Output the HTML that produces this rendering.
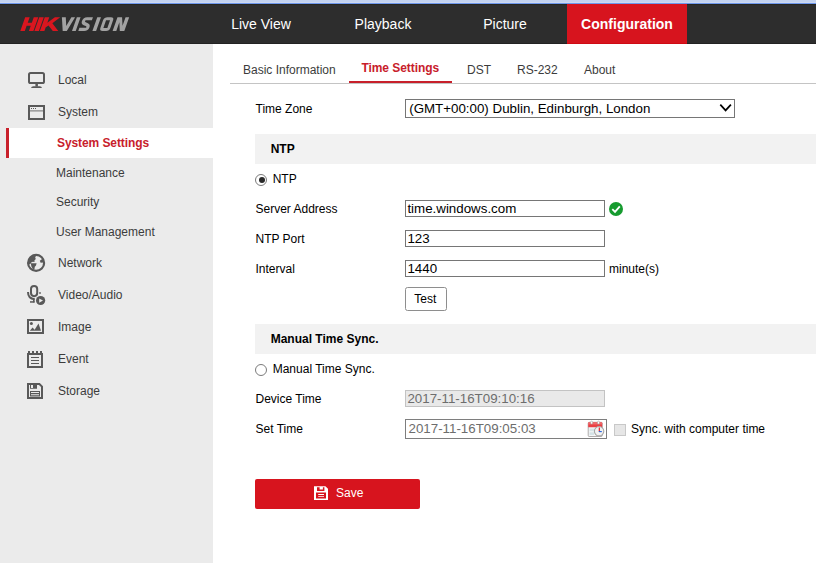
<!DOCTYPE html>
<html>
<head>
<meta charset="utf-8">
<title>Configuration</title>
<style>
*{box-sizing:border-box;margin:0;padding:0}
html,body{width:816px;height:563px;overflow:hidden;background:#fff}
body{font-family:"Liberation Sans",sans-serif;font-size:12px;color:#000;position:relative}
.abs{position:absolute}
.t{position:absolute;white-space:nowrap;line-height:14px;height:14px}
#strip{left:0;top:0;width:816px;height:4px;background:linear-gradient(#c3d2f0 0,#c3d2f0 2px,#ccd8f1 2px,#ccd8f1 3px,#6e97ec 3px,#6e97ec 4px)}
#hdr{left:0;top:4px;width:816px;height:40px;background:#2d2d2d;border-bottom:1px solid #222;border-top:1px solid #262521}
.nav{position:absolute;top:4px;height:40px;width:120px;text-align:center;line-height:40px;font-size:14px;color:#fff}
.nav.on{background:#d7141e;border-bottom:1px solid #cf0a14;font-weight:bold}
#side{left:0;top:44px;width:213px;height:519px;background:#ebebeb}
#sel{left:6px;top:128px;width:207px;height:30px;background:#fff;border-left:3px solid #c8202b}
.m{color:#3c3c3c}
.tab{color:#3c3c3c}
.bar{position:absolute;left:255px;width:561px;height:30px;background:#f2f2f2}
.inp{position:absolute;left:405px;width:200px;height:17px;border:1px solid #767676;background:#fff;font-size:13.333px;line-height:15px;padding-left:1.4px;white-space:nowrap;overflow:hidden}
.radio{position:absolute;width:12px;height:12px;border:1px solid #7b7b7b;border-radius:50%;background:#fff}
</style>
</head>
<body>
<div id="strip" class="abs"></div>
<div id="hdr" class="abs"></div>
<div class="nav" style="left:201px">Live View</div>
<div class="nav" style="left:323px">Playback</div>
<div class="nav" style="left:445px">Picture</div>
<div class="nav on" style="left:567px">Configuration</div>

<!-- logo -->
<svg class="abs" style="left:0;top:0" width="160" height="44" viewBox="0 0 160 44">
<path d="M25.18 17.15 L29.68 17.15 L27.73 22.65 L31.83 22.65 L33.78 17.15 L38.28 17.15 L33.40 30.90 L28.90 30.90 L30.76 25.65 L26.66 25.65 L24.80 30.90 L20.30 30.90 Z M39.28 17.15 L43.78 17.15 L38.90 30.90 L34.40 30.90 Z M44.78 17.15 L49.28 17.15 L44.40 30.90 L39.90 30.90 Z M46.68 23.35 L54.88 17.15 L60.18 17.15 L52.35 23.15 L58.30 30.90 L52.80 30.90 L48.50 25.55 L45.12 27.75 Z" fill="#d9161f"/>
<path d="M61.88 17.15 L65.78 17.15 L66.22 26.05 L71.38 17.15 L75.08 17.15 L66.80 30.90 L62.70 30.90 Z M76.88 17.15 L80.58 17.15 L75.70 30.90 L72.00 30.90 Z M97.28 17.15 L100.98 17.15 L96.10 30.90 L92.40 30.90 Z M117.48 17.15 L122.08 17.15 L122.53 25.75 L125.58 17.15 L129.18 17.15 L124.30 30.90 L119.80 30.90 L119.34 22.35 L116.30 30.90 L112.60 30.90 Z" fill="#a2a2a2"/>
<g transform="matrix(1 0 -0.355 1 4.881 17.15)" fill="none" stroke="#a2a2a2">
<path d="M88.1 1.55 H82.2 Q80 1.55 80 3.9 Q80 5.8 82.2 6.6 L84.6 7.5 Q86.6 8.3 86.6 10 Q86.6 12.2 84.2 12.2 H78.3" stroke-width="3.1"/>
<rect x="100.8" y="1.5" width="7" height="10.75" rx="1.7" stroke-width="3"/>
</g>
</svg>

<div id="side" class="abs"></div>
<div id="sel" class="abs"></div>

<div class="t m" style="left:58px;top:73px">Local</div>
<div class="t m" style="left:58px;top:105px">System</div>
<div class="t" style="left:57px;top:136px;color:#c8202b;font-weight:bold;letter-spacing:-0.09px">System Settings</div>
<div class="t m" style="left:56px;top:166px">Maintenance</div>
<div class="t m" style="left:56px;top:195px">Security</div>
<div class="t m" style="left:56px;top:225px">User Management</div>
<div class="t m" style="left:58px;top:256px">Network</div>
<div class="t m" style="left:58px;top:288px">Video/Audio</div>
<div class="t m" style="left:58px;top:320px">Image</div>
<div class="t m" style="left:58px;top:352px">Event</div>
<div class="t m" style="left:58px;top:384px">Storage</div>

<!-- sidebar icons -->
<svg class="abs" style="left:0;top:0" width="60" height="420" viewBox="0 0 60 420">
<g fill="none" stroke="#595959" stroke-width="2">
<!-- local: monitor -->
<rect x="29" y="73" width="15" height="10" rx="1.6"/>
<!-- system: window -->
<rect x="29" y="106" width="15" height="13"/>
<!-- globe ring -->
<circle cx="36.1" cy="262.9" r="8" stroke-width="2.2"/>
<!-- mic capsule -->
<rect x="31" y="286" width="6.2" height="10.2" rx="3.1"/>
<path d="M28 292 C28 296.5 30.5 298.8 34.6 299.2"/>
<!-- image frame -->
<rect x="28" y="320" width="15" height="13"/>
<!-- event frame -->
<rect x="28" y="354" width="14" height="13"/>
<!-- storage frame -->
<path d="M28 384 H39.4 L42 386.6 V398 H28 Z"/>
</g>
<g fill="#595959" stroke="none">
<!-- monitor stand -->
<rect x="35.4" y="84" width="2.5" height="2.6"/>
<path d="M31 88 Q31.4 86.4 33.4 86.2 H39.8 Q41.6 86.4 42 88 Z"/>
<!-- window dots + divider -->
<rect x="30" y="110.4" width="13" height="1" opacity="0.85"/>
<rect x="31" y="108" width="1" height="1"/><rect x="33" y="108" width="1" height="1"/><rect x="35" y="108" width="1" height="1"/>
<!-- globe land -->
<path d="M28.2 262 C28.3 258.5 30.5 255.6 34 254.9 L36 255.8 L35.2 257.6 L35.8 259 L34.4 260.4 L34.6 262 L32.8 261.8 L31.2 262.4 L30.4 264 L28.6 264.2 Z"/>
<path d="M30.8 263.2 L36.6 263.2 L36 265.4 L34.8 266.8 L34.4 269.6 L33.2 269.8 L31.4 266.4 Z"/>
<path d="M39.8 260.8 L42.2 259 L43.8 260.4 L43.2 262.5 L40.6 262.7 Z"/>
<!-- mic stem/base/dot -->
<rect x="33" y="298.4" width="1.6" height="4"/>
<rect x="30" y="301.2" width="4.6" height="1.5"/>
<rect x="39.2" y="292.2" width="1.6" height="1.6"/>
<circle cx="40.6" cy="300.5" r="4.6"/>
<!-- image content -->
<circle cx="31.4" cy="323.5" r="1.5"/>
<path d="M29.8 330.8 L32.6 327.4 L34.6 329.8 L38.5 323.4 L41 330.8 Z"/>
<!-- event teeth + lines -->
<rect x="28" y="351" width="2" height="2.4"/><rect x="32" y="351" width="2" height="2.4"/><rect x="36" y="351" width="2" height="2.4"/><rect x="40" y="351" width="2" height="2.4"/>
<rect x="31" y="357" width="8" height="1"/><rect x="31" y="360" width="8" height="1"/><rect x="31" y="363" width="8" height="1"/>
<!-- storage shutter + label -->
<path d="M30 385 H37 V388.8 H30 Z M31 385 V387.9 H33 V385 Z" fill-rule="evenodd"/>
<path d="M30 391 H40 V396.4 H30 Z M31 392 V393 H39 V392 Z M31 394.2 V395.2 H39 V394.2 Z" fill-rule="evenodd"/>
</g>
<!-- play triangle -->
<path d="M39.2 298.4 L43 300.6 L39.2 302.8 Z" fill="#ebebeb"/>
</svg>

<!-- tabs -->
<div class="abs" style="left:230px;top:83px;width:586px;height:1px;background:#c4c4c4"></div>
<div class="abs" style="left:349px;top:81px;width:103px;height:2px;background:#c8202b"></div>
<div class="t tab" style="left:243px;top:63px">Basic Information</div>
<div class="t" style="left:361.4px;top:61px;color:#c8202b;font-weight:bold;letter-spacing:-0.05px">Time Settings</div>
<div class="t tab" style="left:467px;top:63px">DST</div>
<div class="t tab" style="left:517px;top:63px">RS-232</div>
<div class="t tab" style="left:584px;top:63px">About</div>

<!-- time zone -->
<div class="t" style="left:255.5px;top:102px">Time Zone</div>
<div class="abs" style="left:405px;top:99px;width:330px;height:19px;border:1px solid #767676;background:#fff;font-size:13.333px;line-height:17px;padding-left:3.2px;white-space:nowrap">(GMT+00:00) Dublin, Edinburgh, London</div>
<svg class="abs" style="left:718px;top:102px" width="16" height="12" viewBox="0 0 16 12"><path d="M2.3 2.6 L7.6 8.4 L12.9 2.6" fill="none" stroke="#000" stroke-width="1.7"/></svg>

<!-- NTP -->
<div class="bar" style="top:134px"></div>
<div class="t" style="left:270.7px;top:142px;font-weight:bold">NTP</div>
<div class="radio" style="left:255px;top:174px"></div>
<div class="abs" style="left:258.5px;top:177px;width:6px;height:6px;border-radius:50%;background:#2a2a2a"></div>
<div class="t" style="left:272.7px;top:172px">NTP</div>

<div class="t" style="left:255.5px;top:202px">Server Address</div>
<div class="inp" style="top:200px">time.windows.com</div>
<svg class="abs" style="left:609px;top:202px" width="14" height="14" viewBox="0 0 14 14"><circle cx="7" cy="7" r="7" fill="#169b2f"/><path d="M3.3 7.1 L6 9.8 L10.8 4.4" fill="none" stroke="#fff" stroke-width="1.85"/></svg>

<div class="t" style="left:255.5px;top:232px">NTP Port</div>
<div class="inp" style="top:230px">123</div>

<div class="t" style="left:255.5px;top:262px">Interval</div>
<div class="inp" style="top:260px">1440</div>
<div class="t" style="left:609px;top:262px">minute(s)</div>

<div class="abs" style="left:405px;top:287px;width:42px;height:24px;border:1px solid #8e8e8e;border-radius:2.5px;background:#fff;text-align:center;line-height:22px;padding-right:1.3px">Test</div>

<!-- Manual -->
<div class="bar" style="top:324px"></div>
<div class="t" style="left:270.7px;top:332px;font-weight:bold">Manual Time Sync.</div>
<div class="radio" style="left:255px;top:364px"></div>
<div class="t" style="left:272.7px;top:362px">Manual Time Sync.</div>

<div class="t" style="left:255.5px;top:392px">Device Time</div>
<div class="inp" style="top:390px;background:#e9e9e9;border-color:#c3c3c3;color:#6d6d6d">2017-11-16T09:10:16</div>

<div class="t" style="left:255.5px;top:422px">Set Time</div>
<div class="inp" style="top:419px;width:202px;height:20px;border-color:#7e7e7e;color:#6d6d6d;line-height:18px;padding-left:2.5px">2017-11-16T09:05:03</div>
<div class="abs" style="left:614px;top:424px;width:12px;height:12px;background:#e6e6e6;border:1px solid #c8c8c8"></div>
<div class="t" style="left:631px;top:422px">Sync. with computer time</div>

<svg class="abs" style="left:587px;top:420px" width="18" height="18" viewBox="0 0 18 18">
<rect x="1.2" y="2.3" width="14" height="14.2" rx="1" fill="#f4f6f7" stroke="#8f8a8a" stroke-width="0.7"/>
<path d="M1.2 3.2 Q1.2 2.3 2.2 2.3 H14.2 Q15.2 2.3 15.2 3.2 V7.2 H1.2 Z" fill="#e93f43"/>
<rect x="1.2" y="2.3" width="14" height="2.2" fill="#f27a7c" opacity="0.7"/>
<rect x="3.6" y="1.1" width="2" height="3" rx="1" fill="#fff" stroke="#9a9a9a" stroke-width="0.5"/>
<rect x="10.5" y="1.1" width="2" height="3" rx="1" fill="#fff" stroke="#9a9a9a" stroke-width="0.5"/>
<rect x="2.6" y="8.6" width="4.4" height="2.6" fill="#d4e3e6"/>
<rect x="2.6" y="12.3" width="4.4" height="2.6" fill="#d4e3e6"/>
<circle cx="12.1" cy="11.2" r="4.7" fill="#f1f1f1" stroke="#a6a6a6" stroke-width="1.1"/>
<path d="M12.3 7.6 V11.6" stroke="#e8141c" stroke-width="1.1" fill="none"/>
<path d="M11.8 11.6 H14.8" stroke="#1f5fe0" stroke-width="1.1" fill="none"/>
</svg>
<!-- Save -->
<div class="abs" style="left:255px;top:479px;width:165px;height:30px;background:#d7141e;border-radius:2px"></div>
<div class="t" style="left:336px;top:486px;color:#fff;line-height:14px">Save</div>
<svg class="abs" style="left:314px;top:486px" width="14" height="14" viewBox="0 0 14 14">
<path d="M0 0.2 H11.4 L14 2.8 V14 H0 Z" fill="#fff"/>
<path d="M3 1.2 H10.4 V5 H3 Z M5.6 1.2 V3.6 H8.9 V1.2 Z" fill="#d7141e" fill-rule="evenodd"/>
<path d="M2 6.5 H12 V12.4 H2 Z M4.2 8.1 V9 H10 V8.1 Z M4.2 9.9 V10.8 H10 V9.9 Z" fill="#d7141e" fill-rule="evenodd"/>
</svg>
</body>
</html>
